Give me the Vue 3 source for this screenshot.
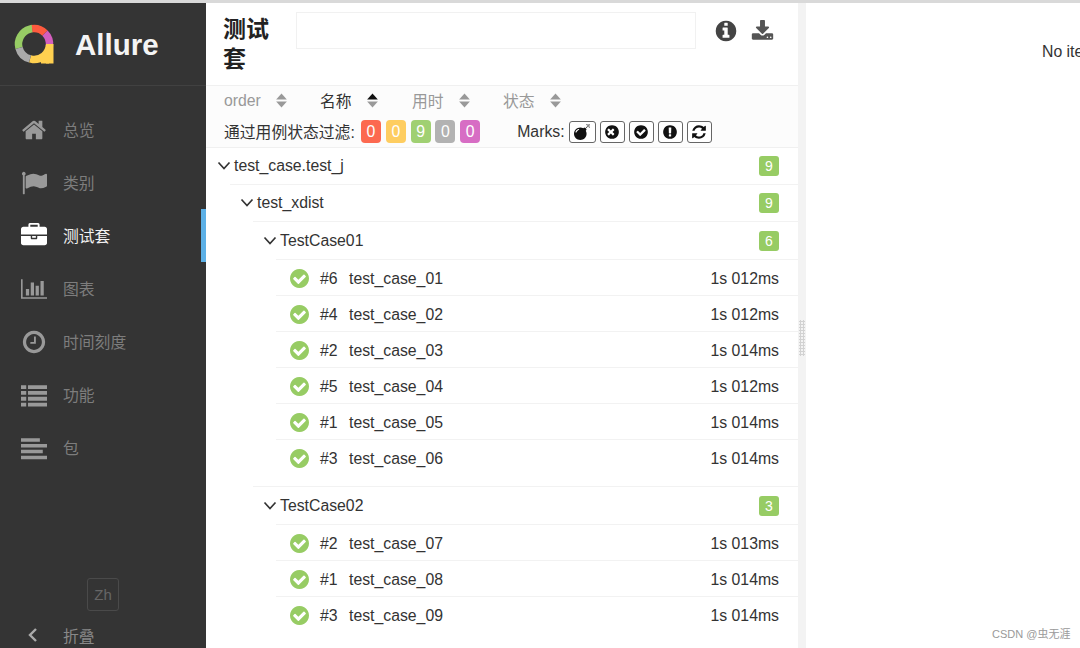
<script setup>
const fa = {
  home: 'M1472 992v480q0 26-19 45t-45 19h-384v-384h-256v384h-384q-26 0-45-19t-19-45v-480q0-1 .5-3t.5-3l575-474 575 474q1 2 1 6zm223-69l-62 74q-8 9-21 11h-3q-13 0-21-7l-692-577-692 577q-12 8-24 7-13-2-21-11l-62-74q-8-10-7-23.5t11-21.5l719-599q32-26 76-26t76 26l244 204v-195q0-14 9-23t23-9h192q14 0 23 9t9 23v408l219 182q10 8 11 21.5t-7 23.5z',
  flag: 'M320 256q0 72-64 110v1266q0 13-9.5 22.5t-22.5 9.5h-64q-13 0-22.5-9.5t-9.5-22.5v-1266q-64-38-64-110 0-53 37.5-90.5t90.5-37.5 90.5 37.5 37.5 90.5zm1472 64v763q0 25-12.5 38.5t-39.5 27.5q-215 116-369 116-61 0-123.5-22t-108.5-48-115.5-48-142.5-22q-192 0-464 146-17 9-33 9-26 0-45-19t-19-45v-742q0-32 31-55 21-14 79-43 236-120 421-120 107 0 200 29t219 88q38 19 88 19 54 0 117.5-21t110-47 88-47 54.5-21q26 0 45 19t19 45z',
  briefcase: 'M640 256h512v-128h-512v128zm1152 640v480q0 66-47 113t-113 47h-1472q-66 0-113-47t-47-113v-480h672v160q0 26 19 45t45 19h320q26 0 45-19t19-45v-160h672zm-768 0v128h-256v-128h256zm768-480v384h-1792v-384q0-66 47-113t113-47h352v-160q0-40 28-68t68-28h576q40 0 68 28t28 68v160h352q66 0 113 47t47 113z',
  chart: 'M640 896v512h-256v-512h256zm384-512v1024h-256v-1024h256zm1024 1152v128h-2048v-1536h128v1408h1920zm-640-896v768h-256v-768h256zm384-384v1152h-256v-1152h256z',
  clock: 'M1024 544v448q0 14-9 23t-23 9h-320q-14 0-23-9t-9-23v-64q0-14 9-23t23-9h224v-352q0-14 9-23t23-9h64q14 0 23 9t9 23zm416 352q0-148-73-273t-198-198-273-73-273 73-198 198-73 273 73 273 198 198 273 73 273-73 198-198 73-273zm224 0q0 209-103 385.5t-279.5 279.5-385.5 103-385.5-103-279.5-279.5-103-385.5 103-385.5 279.5-279.5 385.5-103 385.5 103 279.5 279.5 103 385.5z',
  list: 'M0 224h360v260h-360zM480 224h1312v260h-1312zM0 624h360v260h-360zM480 624h1312v260h-1312zM0 1024h360v260h-360zM480 1024h1312v260h-1312zM0 1424h360v260h-360zM480 1424h1312v260h-1312z',
  align: 'M0 224h1300v240h-1300zM0 624h1792v240h-1792zM0 1024h1500v240h-1500zM0 1424h1792v240h-1792z',
  check: 'M1412 734q0-28-18-46l-91-90q-19-19-45-19t-45 19l-408 407-226-226q-19-19-45-19t-45 19l-91 90q-18 18-18 46 0 27 18 45l362 362q19 19 45 19 27 0 46-19l543-543q18-18 18-45zm252 162q0 209-103 385.5t-279.5 279.5-385.5 103-385.5-103-279.5-279.5-103-385.5 103-385.5 279.5-279.5 385.5-103 385.5 103 279.5 279.5 103 385.5z',
  times: 'M1149 1122q0-26-19-45l-181-181 181-181q19-19 19-45 0-27-19-46l-90-90q-19-19-46-19-26 0-45 19l-181 181-181-181q-19-19-45-19-27 0-46 19l-90 90q-19 19-19 46 0 26 19 45l181 181-181 181q-19 19-19 45 0 27 19 46l90 90q19 19 46 19 26 0 45-19l181-181 181 181q19 19 45 19 27 0 46-19l90-90q19-19 19-46zm515-226q0 209-103 385.5t-279.5 279.5-385.5 103-385.5-103-279.5-279.5-103-385.5 103-385.5 279.5-279.5 385.5-103 385.5 103 279.5 279.5 103 385.5z',
  excl: 'M896 128q209 0 385.5 103t279.5 279.5 103 385.5-103 385.5-279.5 279.5-385.5 103-385.5-103-279.5-279.5-103-385.5 103-385.5 279.5-279.5 385.5-103zm128 1247v-190q0-14-9-23.5t-22-9.5h-192q-13 0-23 10t-10 23v190q0 13 10 23t23 10h192q13 0 22-9.5t9-23.5zm-2-344l18-621q0-12-10-18-10-8-24-8h-220q-14 0-24 8-10 6-10 18l17 621q0 10 10 17.5t24 7.5h185q14 0 23.5-7.5t10.5-17.5z',
  info: 'M1152 1376v-160q0-14-9-23t-23-9h-96v-512q0-14-9-23t-23-9h-320q-14 0-23 9t-9 23v160q0 14 9 23t23 9h96v320h-96q-14 0-23 9t-9 23v160q0 14 9 23t23 9h448q14 0 23-9t9-23zm-128-896v-160q0-14-9-23t-23-9h-192q-14 0-23 9t-9 23v160q0 14 9 23t23 9h192q14 0 23-9t9-23zm640 416q0 209-103 385.5t-279.5 279.5-385.5 103-385.5-103-279.5-279.5-103-385.5 103-385.5 279.5-279.5 385.5-103 385.5 103 279.5 279.5 103 385.5z',
  download: 'M1344 1344q0-26-19-45t-45-19-45 19-19 45 19 45 45 19 45-19 19-45zm256 0q0-26-19-45t-45-19-45 19-19 45 19 45 45 19 45-19 19-45zm128-224v320q0 40-28 68t-68 28h-1472q-40 0-68-28t-28-68v-320q0-40 28-68t68-28h465l135 136q58 56 136 56t136-56l136-136h464q40 0 68 28t28 68zm-325-569q17 41-14 70l-448 448q-18 19-45 19t-45-19l-448-448q-31-29-14-70 17-39 59-39h256v-448q0-26 19-45t45-19h256q26 0 45 19t19 45v448h256q42 0 59 39z',
  refresh: 'M1639 1056q0 5-1 7-64 268-268 434.5t-478 166.5q-146 0-282.5-55t-243.5-157l-129 129q-19 19-45 19t-45-19-19-45v-448q0-26 19-45t45-19h448q26 0 45 19t19 45-19 45l-137 137q71 66 161 102t187 36q134 0 250-65t186-179q11-17 53-117 8-23 30-23h192q13 0 22.5 9.5t9.5 22.5zm25-800v448q0 26-19 45t-45 19h-448q-26 0-45-19t-19-45 19-45l138-138q-148-137-349-137-134 0-250 65t-186 179q-11 17-53 117-8 23-30 23h-199q-13 0-22.5-9.5t-9.5-22.5v-7q65-268 270-434.5t480-166.5q146 0 284 55.5t245 156.5l130-129q19-19 45-19t45 19 19 45z',
  bomb: 'M571 589q-10-25-34-35t-49 0q-108 44-191 127t-127 191q-10 25 0 49t35 34q13 5 24 5 42 0 60-40 34-84 98.5-148.5t148.5-98.5q25-11 35-35t0-49zm942-356l46 46-244 243 68 68q19 19 19 45.5t-19 45.5l-64 64q89 161 89 343 0 143-55.5 273.5t-150 225-225 150-273.5 55.5-273.5-55.5-225-150-150-225-55.5-273.5 55.5-273.5 150-225 225-150 273.5-55.5q182 0 343 89l64-64q19-19 45.5-19t45.5 19l68 68zm8-56q-10 10-22 10-13 0-23-10l-91-90q-9-10-9-23t9-23q10-9 23-9t23 9l90 91q10 9 10 22.5t-10 22.5zm230 230q-11 9-23 9t-23-9l-90-91q-10-9-10-22.5t10-22.5q9-10 22.5-10t22.5 10l91 90q9 10 9 23t-9 23zm41-183q0 14-9 23t-23 9h-96q-14 0-23-9t-9-23 9-23 23-9h96q14 0 23 9t9 23zm-192-192v96q0 14-9 23t-23 9-23-9-9-23v-96q0-14 9-23t23-9 23 9 9 23zm151 55l-91 90q-10 10-22 10-13 0-23-10-10-9-10-22.5t10-22.5l90-91q10-9 23-9t23 9q9 10 9 23t-9 23z'
}

const nav = [
  { label: '总览', icon: fa.home, box: '0 0 1792 1792' },
  { label: '类别', icon: fa.flag, box: '0 0 1792 1792' },
  { label: '测试套', icon: fa.briefcase, box: '0 0 1792 1792', active: true },
  { label: '图表', icon: fa.chart, box: '0 0 2048 1792' },
  { label: '时间刻度', icon: fa.clock, box: '0 0 1792 1792' },
  { label: '功能', icon: fa.list, box: '0 0 1792 1792' },
  { label: '包', icon: fa.align, box: '0 0 1792 1792' }
]

const sorters = [
  { label: 'order', cls: 'c1' },
  { label: '名称', cls: 'c2', active: true },
  { label: '用时', cls: 'c3' },
  { label: '状态', cls: 'c4' }
]

const statuses = [
  { n: 0, cls: 'failed' },
  { n: 0, cls: 'broken' },
  { n: 9, cls: 'passed' },
  { n: 0, cls: 'skipped' },
  { n: 0, cls: 'unknown' }
]

const marks = [
  { icon: fa.bomb, cls: 'wide' },
  { icon: fa.times },
  { icon: fa.check },
  { icon: fa.excl },
  { icon: fa.refresh }
]

const group1 = [
  { o: '#6', name: 'test_case_01', t: '1s 012ms' },
  { o: '#4', name: 'test_case_02', t: '1s 012ms' },
  { o: '#2', name: 'test_case_03', t: '1s 014ms' },
  { o: '#5', name: 'test_case_04', t: '1s 012ms' },
  { o: '#1', name: 'test_case_05', t: '1s 014ms' },
  { o: '#3', name: 'test_case_06', t: '1s 014ms' }
]
const group2 = [
  { o: '#2', name: 'test_case_07', t: '1s 013ms' },
  { o: '#1', name: 'test_case_08', t: '1s 014ms' },
  { o: '#3', name: 'test_case_09', t: '1s 014ms' }
]
const groups = [
  { name: 'TestCase01', count: 6, items: group1 },
  { name: 'TestCase02', count: 3, items: group2 }
]
const ring = [
  { c: '#97cc64', a: '100 260', r: 255 },
  { c: '#fd5a3e', a: '52 308', r: 353 },
  { c: '#d35ebe', a: '52 308', r: 45 },
  { c: '#ffd050', a: '100 260', r: 95 },
  { c: '#aaaaaa', a: '60 300', r: 195 }
]
</script>

<template>
  <div class="page">
    <div class="strip"></div>
    <div class="main">
      <aside class="side">
        <div class="brand">
          <svg class="logo" viewBox="0 0 44 44" width="44" height="44">
            <circle
              v-for="s in ring"
              :key="s.r"
              cx="21"
              cy="21"
              r="15.5"
              fill="none"
              stroke-width="7.5"
              pathLength="360"
              :stroke="s.c"
              :stroke-dasharray="s.a"
              :transform="`rotate(${s.r - 90} 21 21)`"
            />
            <rect x="33" y="21" width="7.5" height="19.5" fill="#ffd050" />
            <rect x="28" y="33" width="8" height="7.5" fill="#ffd050" />
          </svg>
          <span class="brand-name">Allure</span>
        </div>
        <nav class="nav">
          <div v-for="n in nav" :key="n.label" class="nav-item" :class="{ active: n.active }">
            <svg class="nav-icon" :viewBox="n.box" width="26" height="26"><path :d="n.icon" fill="currentColor" /></svg>
            <span>{{ n.label }}</span>
          </div>
        </nav>
        <div class="lang">Zh</div>
        <div class="collapse">
          <svg class="collapse-icon" viewBox="0 0 12 16" width="12" height="16"><path d="M9 2 3 8l6 6" fill="none" stroke="currentColor" stroke-width="2.4" /></svg>
          <span>折叠</span>
        </div>
      </aside>

      <section class="pane">
        <header class="head">
          <h2 class="title">测试套</h2>
          <div class="search"></div>
          <div class="head-icons">
            <svg viewBox="0 0 1792 1792" width="24" height="24"><path :d="fa.info" fill="#444" /></svg>
            <svg viewBox="0 0 1792 1792" width="23" height="23"><path :d="fa.download" fill="#555" /></svg>
          </div>
        </header>
        <div class="tools">
          <div class="sorters">
            <div v-for="s in sorters" :key="s.label" class="sorter" :class="[s.cls, { on: s.active }]">
              <span>{{ s.label }}</span>
              <svg viewBox="0 0 10 14" width="11" height="15">
                <path d="M5 0.5 10 6H0z" :fill="s.active ? '#111' : '#999'" />
                <path d="M5 13.5 0 8h10z" fill="#999" />
              </svg>
            </div>
          </div>
          <div class="filters">
            <span class="filter-label">通过用例状态过滤:</span>
            <span class="badges">
              <span v-for="(b, i) in statuses" :key="i" class="badge" :class="b.cls">{{ b.n }}</span>
            </span>
            <span class="marks-label">Marks:</span>
            <span class="marks">
              <span v-for="(m, i) in marks" :key="i" class="mark" :class="m.cls">
                <svg viewBox="0 0 1792 1792" width="16" height="16"><path :d="m.icon" fill="#111" /></svg>
              </span>
            </span>
          </div>
        </div>

        <div class="tree">
          <div class="row group">
            <svg class="chev" viewBox="0 0 14 10" width="14" height="10"><path d="M1.5 1.5 7 7.5l5.5-6" fill="none" stroke="currentColor" stroke-width="1.7" /></svg>
            <span class="grow">test_case.test_j</span>
            <span class="count">9</span>
          </div>
          <div class="nest">
            <div class="row group">
              <svg class="chev" viewBox="0 0 14 10" width="14" height="10"><path d="M1.5 1.5 7 7.5l5.5-6" fill="none" stroke="currentColor" stroke-width="1.7" /></svg>
              <span class="grow">test_xdist</span>
              <span class="count">9</span>
            </div>
            <div class="nest">
              <div v-for="g in groups" :key="g.name" class="suite">
                <div class="row group suite-head">
                  <svg class="chev" viewBox="0 0 14 10" width="14" height="10"><path d="M1.5 1.5 7 7.5l5.5-6" fill="none" stroke="currentColor" stroke-width="1.7" /></svg>
                  <span class="grow">{{ g.name }}</span>
                  <span class="count">{{ g.count }}</span>
                </div>
                <div class="nest">
                  <div v-for="t in g.items" :key="t.name" class="row test">
                    <svg class="ok" viewBox="128 128 1536 1536" width="19" height="19"><path :d="fa.check" fill="#97cc64" /></svg>
                    <span class="order">{{ t.o }}</span>
                    <span class="grow">{{ t.name }}</span>
                    <span class="time">{{ t.t }}</span>
                  </div>
                </div>
              </div>
            </div>
          </div>
        </div>
      </section>

      <div class="splitter"><div class="grip"></div></div>

      <section class="detail">No item selected</section>
    </div>
    <div class="mark-water">CSDN @虫无涯</div>
  </div>
</template>

<style>
html, body { margin: 0; background: #fff; }
</style>

<style scoped>
.page {
  position: relative;
  width: 1080px;
  height: 648px;
  overflow: hidden;
  display: flex;
  flex-direction: column;
  font-family: "Liberation Sans", "Noto Sans CJK SC", sans-serif;
  font-size: 15.8px;
  color: #333;
  background: #fff;
}
.strip { height: 3px; flex: none; background: #d9d9d9; }
.main { flex: 1; min-height: 0; display: flex; }

.side {
  width: 206px;
  flex: none;
  background: #343434;
  overflow: hidden;
  display: flex;
  flex-direction: column;
}
.brand {
  height: 83px;
  flex: none;
  box-sizing: border-box;
  border-bottom: 1px solid #414141;
  display: flex;
  align-items: center;
  padding-left: 13px;
}
.logo { flex: none; margin-top: 2px; }
.brand-name {
  margin-left: 18px;
  font-size: 29.5px;
  font-weight: 700;
  color: #f4f4f4;
  margin-top: 1px;
}
.nav { margin-top: 17px; flex: none; }
.nav-item {
  height: 53px;
  display: flex;
  align-items: center;
  padding-left: 21px;
  color: #7d7d7d;
  box-sizing: border-box;
}
.nav-icon { flex: none; color: #999; margin-right: 16px; }
.nav-item.active { color: #f2f2f2; border-right: 5px solid #5cb0e6; }
.nav-item.active .nav-icon { color: #fff; }
.lang {
  width: 32px;
  height: 33px;
  flex: none;
  box-sizing: border-box;
  margin: 104px 0 0 87px;
  border: 1px solid #4a4a4a;
  border-radius: 3px;
  color: #666;
  font-size: 15px;
  display: flex;
  align-items: center;
  justify-content: center;
}
.collapse {
  height: 48px;
  flex: none;
  display: flex;
  align-items: center;
  padding-left: 27px;
  color: #888;
}
.collapse-icon { margin-right: 24px; color: #aaa; }

.pane {
  width: 592px;
  flex: none;
  display: flex;
  flex-direction: column;
  overflow: hidden;
}
.head {
  height: 83px;
  flex: none;
  box-sizing: border-box;
  border-bottom: 1px solid #f0f0f0;
  display: flex;
  align-items: flex-start;
}
.title {
  width: 48px;
  margin: 11px 0 0 17px;
  font-size: 23px;
  line-height: 30px;
  font-weight: 700;
  color: #222;
  flex: none;
}
.search {
  width: 400px;
  height: 37px;
  box-sizing: border-box;
  margin: 9px 0 0 25px;
  border: 1px solid #f1f1f1;
  flex: none;
}
.head-icons {
  display: flex;
  align-items: center;
  gap: 13px;
  margin: 16px 0 0 18px;
}
.tools {
  height: 61px;
  flex: none;
  background: #fcfcfc;
  padding-left: 18px;
  box-sizing: border-box;
}
.sorters { display: flex; height: 29px; align-items: center; }
.sorter {
  display: flex;
  align-items: center;
  gap: 15px;
  color: #999;
  flex: none;
}
.sorter.on { color: #333; }
.c1 { width: 96px; }
.c2 { width: 92px; }
.c3 { width: 91px; }
.filters {
  display: flex;
  align-items: center;
  height: 32px;
  box-sizing: border-box;
  padding-top: 1px;
  color: #333;
}
.filter-label { width: 137px; flex: none; white-space: nowrap; }
.badges { display: flex; gap: 4.8px; }
.badge {
  width: 20px;
  height: 23px;
  border-radius: 4px;
  color: #fff;
  opacity: 0.9;
  display: flex;
  align-items: center;
  justify-content: center;
}
.failed { background: #fd5a3e; }
.broken { background: #ffc850; }
.passed { background: #97cc64; }
.skipped { background: #aaa; }
.unknown { background: #d35ebe; }
.marks-label { margin-left: 37px; margin-top: 1px; }
.marks { display: flex; gap: 4px; margin-left: 4px; margin-top: 1px; }
.mark {
  width: 25px;
  height: 22px;
  box-sizing: border-box;
  border: 1px solid #666;
  border-radius: 3px;
  display: flex;
  align-items: center;
  justify-content: center;
  background: #fff;
}
.mark.wide { width: 27px; }

.tree { border-top: 1px solid #f0f0f0; padding-left: 1px; flex: 1; }
.tree > .row:first-child { border-top: 0; height: 36px; }
.row {
  display: flex;
  align-items: center;
  box-sizing: border-box;
  border-top: 1px solid #f2f2f2;
  padding-right: 19px;
  color: #333;
}
.group { height: 37px; padding-left: 10px; }
.suite-head { height: 38px; padding-top: 1px; }
.chev { margin-right: 3px; color: #333; flex: none; }
.grow { flex: 1; }
.count {
  width: 20px;
  height: 20px;
  border-radius: 3px;
  background: #97cc64;
  color: #fff;
  font-size: 14px;
  display: flex;
  align-items: center;
  justify-content: center;
}
.nest { margin-left: 23px; }
.suite { margin-bottom: 11px; }
.test { height: 36px; padding-left: 14px; padding-top: 2px; }
.ok { flex: none; margin-right: 11px; }
.order { width: 29px; flex: none; }
.time { color: #333; }

.splitter {
  width: 8px;
  flex: none;
  background: #f3f3f3;
  display: flex;
  align-items: center;
  justify-content: center;
}
.grip {
  width: 6px;
  height: 36px;
  margin-top: 25px;
  background-image: radial-gradient(circle, #d2d2d2 1px, transparent 1.2px);
  background-size: 3px 3px;
}
.detail {
  flex: 1;
  min-width: 0;
  overflow: hidden;
  white-space: nowrap;
  padding: 40px 0 0 236px;
  box-sizing: border-box;
  color: #333;
}
.mark-water {
  position: absolute;
  left: 992px;
  top: 625px;
  font-size: 11px;
  color: #999;
}
</style>
